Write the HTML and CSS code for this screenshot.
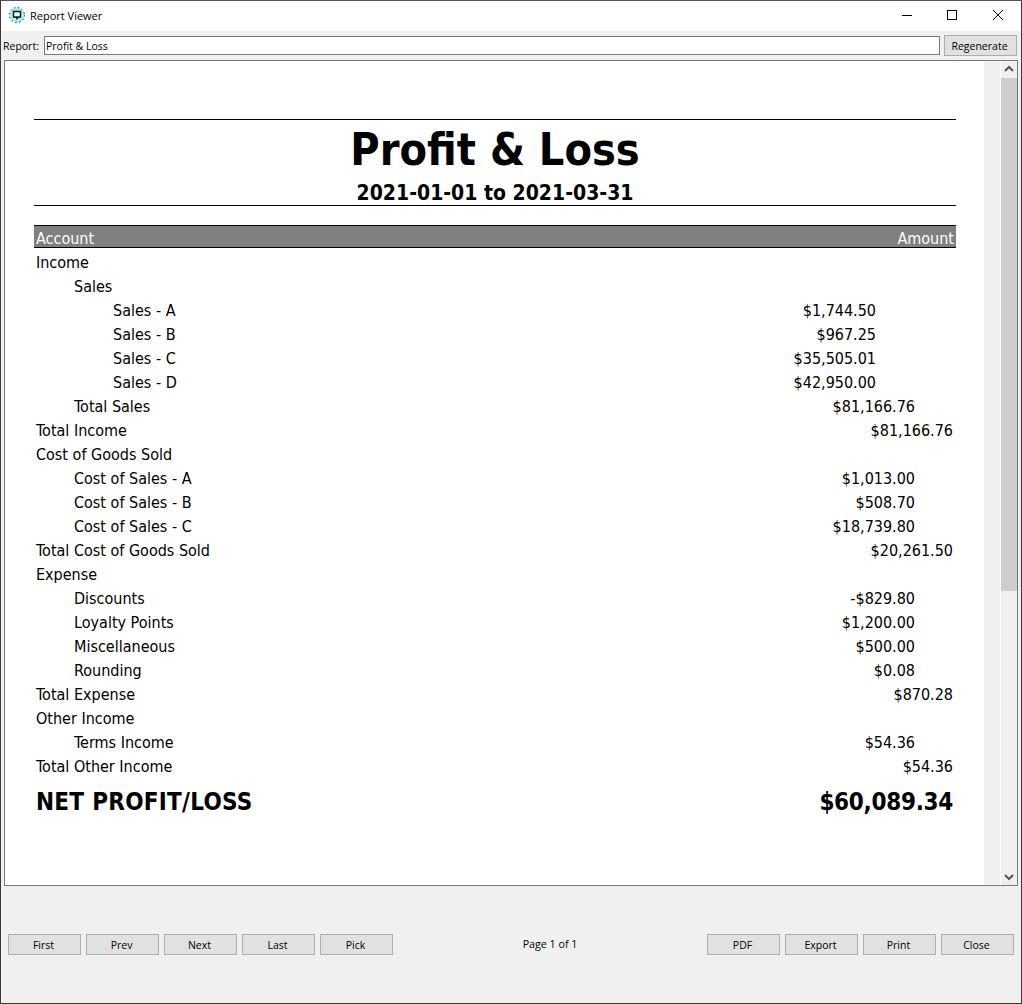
FILE: index.html
```html
<!DOCTYPE html>
<html lang="en">
<head>
<meta charset="utf-8">
<title>Report Viewer</title>
<link rel="stylesheet" href="styles.css">
</head>
<body>
<div class="window">
  <header class="titlebar">
    <svg class="app-icon" width="16" height="16" viewBox="0 0 16 16"><circle cx="8" cy="8" r="7.5" fill="#9ff3f8" stroke="#1c3a40" stroke-dasharray="1.500 2.500"/><path d="M4.500 4.500h7v5.500h-2l-1.500 1.500v-1.500h-3.500z" fill="#eafcfd" stroke="#111" stroke-width="1.400"/></svg>
    <span class="title">Report Viewer</span>
    <div class="win-controls">
      <svg class="win-btn" width="46" height="30" viewBox="0 0 46 30"><path d="M19 14.500h10" stroke="#000"/></svg>
      <svg class="win-btn" width="46" height="30" viewBox="0 0 46 30"><rect x="18.500" y="9.500" width="9" height="9" fill="none" stroke="#000"/></svg>
      <svg class="win-btn" width="46" height="30" viewBox="0 0 46 30"><path d="M18 9l10 10M28 9l-10 10" stroke="#000" fill="none"/></svg>
    </div>
  </header>
  <div class="toolbar">
    <label class="report-label">Report:</label>
    <div class="report-input">Profit &amp; Loss</div>
    <button class="btn regen">Regenerate</button>
  </div>
  <div class="viewer">
    <div class="canvas">
      <div class="page">
        <div class="report-title">
          <h1>Profit &amp; Loss</h1>
          <h2>2021-01-01 to 2021-03-31</h2>
        </div>
        <div class="table-head"><span>Account</span><span>Amount</span></div>
        <div class="row"><span>Income</span></div>
        <div class="row l1"><span>Sales</span></div>
        <div class="row l2"><span>Sales - A</span><span class="amt">$1,744.50</span></div>
        <div class="row l2"><span>Sales - B</span><span class="amt">$967.25</span></div>
        <div class="row l2"><span>Sales - C</span><span class="amt">$35,505.01</span></div>
        <div class="row l2"><span>Sales - D</span><span class="amt">$42,950.00</span></div>
        <div class="row l1"><span>Total Sales</span><span class="amt">$81,166.76</span></div>
        <div class="row"><span>Total Income</span><span class="amt">$81,166.76</span></div>
        <div class="row"><span>Cost of Goods Sold</span></div>
        <div class="row l1"><span>Cost of Sales - A</span><span class="amt">$1,013.00</span></div>
        <div class="row l1"><span>Cost of Sales - B</span><span class="amt">$508.70</span></div>
        <div class="row l1"><span>Cost of Sales - C</span><span class="amt">$18,739.80</span></div>
        <div class="row"><span>Total Cost of Goods Sold</span><span class="amt">$20,261.50</span></div>
        <div class="row"><span>Expense</span></div>
        <div class="row l1"><span>Discounts</span><span class="amt">-$829.80</span></div>
        <div class="row l1"><span>Loyalty Points</span><span class="amt">$1,200.00</span></div>
        <div class="row l1"><span>Miscellaneous</span><span class="amt">$500.00</span></div>
        <div class="row l1"><span>Rounding</span><span class="amt">$0.08</span></div>
        <div class="row"><span>Total Expense</span><span class="amt">$870.28</span></div>
        <div class="row"><span>Other Income</span></div>
        <div class="row l1"><span>Terms Income</span><span class="amt">$54.36</span></div>
        <div class="row"><span>Total Other Income</span><span class="amt">$54.36</span></div>
        <div class="net"><span class="net-label">NET PROFIT/LOSS</span><span class="net-amt">$60,089.34</span></div>
      </div>
    </div>
    <div class="gutter"></div>
    <div class="scrollbar">
      <svg class="arrow" width="16" height="17" viewBox="0 0 16 17"><path d="M4 10l4-4 4 4" fill="none" stroke="#555" stroke-width="2"/></svg>
      <div class="track"><div class="thumb"></div></div>
      <svg class="arrow" width="16" height="17" viewBox="0 0 16 17"><path d="M4 7l4 4 4-4" fill="none" stroke="#555" stroke-width="2"/></svg>
    </div>
  </div>
  <footer class="footer">
    <div class="btn-group">
      <button class="btn nav">First</button>
      <button class="btn nav">Prev</button>
      <button class="btn nav">Next</button>
      <button class="btn nav">Last</button>
      <button class="btn nav">Pick</button>
    </div>
    <div class="page-info">Page 1 of 1</div>
    <div class="btn-group">
      <button class="btn nav">PDF</button>
      <button class="btn nav">Export</button>
      <button class="btn nav">Print</button>
      <button class="btn nav">Close</button>
    </div>
  </footer>
</div>
</body>
</html>
```
FILE: styles.css
```css
* { box-sizing: border-box; }
html, body { margin: 0; height: 100%; }
body { background: #f0f0f0; overflow: hidden; }
.window {
  width: 1022px; height: 1004px;
  display: flex; flex-direction: column;
  background: #f0f0f0;
  border: 1px solid #3a3a3a; border-top-color: #555;
  font-family: "Open Sans", "Noto Sans", sans-serif;
  font-size: 10.5px; color: #000;
}
.titlebar {
  height: 30px; flex: none; background: #fff;
  display: flex; align-items: center; padding: 0 0 2px 8px;
}
.app-icon { flex: none; }
.title { margin-left: 5px; font-size: 11px; }
.win-controls { margin-left: auto; display: flex; align-self: flex-start; }
.win-btn { display: block; }
.toolbar {
  height: 29px; flex: none;
  display: flex; align-items: center;
  padding: 0 4px 0 2px;
}
.report-label { width: 41px; flex: none; }
.report-input {
  width: 896px; height: 19px; flex: none;
  background: #fff; border: 1px solid #7a7a7a;
  padding-left: 1px; line-height: 18px;
}
.btn {
  font: inherit; color: #000; padding: 0 2px 0 0;
  background: #e1e1e1; border: 1px solid #adadad;
}
.regen { width: 74px; height: 21px; margin-left: 4px; }
.viewer {
  margin: 0 3px; height: 826px; flex: none;
  display: flex; background: #fff;
  border: 1px solid #7a7a7a;
}
.canvas { width: 979px; flex: none; background: #fff; }
.gutter { width: 17px; flex: none; background: #f0f0f0; border-right: 1px solid #fff; }
.scrollbar {
  flex: 1; display: flex; flex-direction: column; background: #f0f0f0;
}
.arrow { display: block; flex: none; }
.track { flex: 1; }
.thumb { height: 513px; background: #cdcdcd; }
.page {
  margin-left: 29px; width: 922px; padding-top: 58px;
  font-family: "DejaVu Sans Condensed", "DejaVu Sans", sans-serif;
  font-stretch: condensed;
}
.report-title {
  border-top: 1px solid #000; border-bottom: 1px solid #000;
  height: 87px; text-align: center;
}
.report-title h1 {
  margin: 0; font-size: 44.6px; line-height: 60px; font-weight: 700;
}
.report-title h2 {
  margin: 0; font-size: 21px; line-height: 26px; font-weight: 700;
}
.table-head {
  margin: 19px 0 2px; height: 23px;
  background: #808080; color: #fff;
  border-top: 1px solid #000; border-bottom: 1px solid #000;
  display: flex; justify-content: space-between; align-items: center;
  padding: 3px 2px 0; font-size: 16px;
}
.row {
  height: 24px; display: flex; align-items: center;
  padding-left: 2px; font-size: 16px;
}
.l1 { padding-left: 40px; }
.l2 { padding-left: 79px; }
.amt { margin-left: auto; margin-right: 3px; }
.l1 .amt { margin-right: 41px; }
.l2 .amt { margin-right: 80px; }
.net {
  height: 48px; display: flex; justify-content: space-between; align-items: center;
  padding: 0 3px 0 2px; font-size: 24px; font-weight: 700;
}
.net-label { letter-spacing: 0.27px; }
.net-amt { letter-spacing: -0.3px; }
.footer {
  flex: 1; display: flex; align-items: flex-start; justify-content: space-between;
  padding: 48px 7px 0;
}
.btn-group { display: flex; gap: 5px; }
.nav { width: 73px; height: 21px; }
.page-info { line-height: 21px; font-size: 10.7px; }
```
